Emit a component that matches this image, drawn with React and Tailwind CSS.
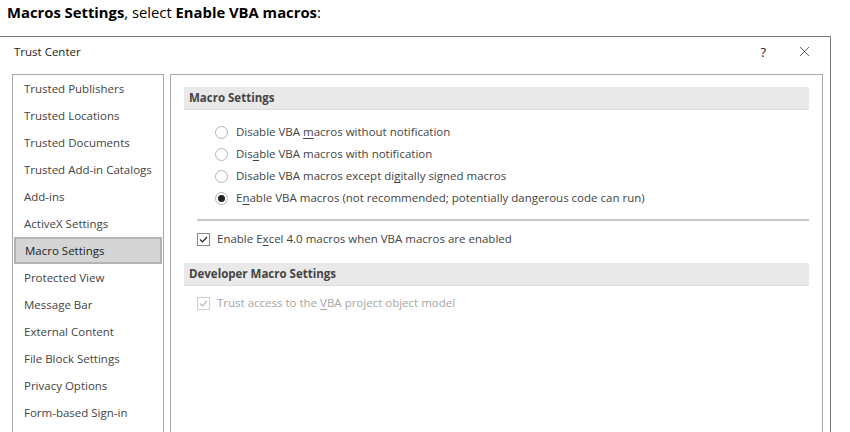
import { X } from "lucide-react";

const navItems = [
  "Trusted Publishers",
  "Trusted Locations",
  "Trusted Documents",
  "Trusted Add-in Catalogs",
  "Add-ins",
  "ActiveX Settings",
  "Macro Settings",
  "Protected View",
  "Message Bar",
  "External Content",
  "File Block Settings",
  "Privacy Options",
  "Form-based Sign-in",
];

const Radio = ({ checked }) => (
  <span className="w-[13px] h-[13px] rounded-full border border-[#b5b5b5] bg-white flex items-center justify-center shrink-0">
    {checked ? <span className="w-[7px] h-[7px] rounded-full bg-[#222]" /> : null}
  </span>
);

const Check = ({ disabled }) => (
  <span
    className={`w-[13px] h-[13px] border flex items-center justify-center shrink-0 ${
      disabled ? "border-[#cfcfcf]" : "border-[#8a8a8a]"
    }`}
  >
    <svg width="9" height="7" viewBox="0 0 9 7" fill="none">
      <path
        d="M1 3.5 L3.5 6 L8 1"
        stroke={disabled ? "#b8b8b8" : "#222"}
        strokeWidth="1.2"
      />
    </svg>
  </span>
);

const U = ({ children }) => <span className="underline underline-offset-2">{children}</span>;

const radios = [
  <>Disable VBA <U>m</U>acros without notification</>,
  <>Dis<U>a</U>ble VBA macros with notification</>,
  <>Disable VBA macros except di<U>g</U>itally signed macros</>,
  <>E<U>n</U>able VBA macros (not recommended; potentially dangerous code can run)</>,
];

export default function App() {
  return (
    <div className="w-[850px] h-[432px] overflow-hidden bg-white text-[#444] font-['Open_Sans',sans-serif]">
      <div className="h-[36px] pl-[7px] pt-[1px] text-[14.8px] text-black">
        <b>Macros Settings</b>, select <b>Enable VBA macros</b>:
      </div>

      <div className="w-[831px] h-[396px] border-t border-r border-[#7a7a7a] flex flex-col">
        <div className="h-[37px] flex items-start justify-between pt-[6px] pl-[14px] pr-[17px] text-[11.5px] text-[#222]">
          <span>Trust Center</span>
          <div className="flex items-center gap-[30px]">
            <span className="text-[13px] leading-[16px]">?</span>
            <X className="w-[17px] h-[17px]" strokeWidth={1} />
          </div>
        </div>

        <div className="flex-1 flex gap-[6px] pl-[12px] pr-[7px] min-h-0 text-[11.5px]">
          <div className="w-[152px] border border-b-0 border-[#ababab]">
            {navItems.map((item) =>
              item === "Macro Settings" ? (
                <div
                  key={item}
                  className="h-[27px] mx-[1px] border-2 border-[#b3b3b3] bg-[#d5d5d5] flex items-center pl-[9px] text-[#222]"
                >
                  {item}
                </div>
              ) : (
                <div key={item} className="h-[27px] flex items-center pl-[11px]">
                  {item}
                </div>
              )
            )}
          </div>

          <div className="flex-1 border border-b-0 border-[#ababab] px-[13px] pt-[12px]">
            <div className="h-[23px] bg-[#e9e9e9] border-b border-[#dcdcdc] flex items-center pl-[5px] font-bold">
              Macro Settings
            </div>
            <div className="pl-[31px] pt-[11px] flex flex-col">
              {radios.map((r, i) => (
                <div key={i} className="h-[22px] flex items-center gap-[8px]">
                  <Radio checked={i === 3} />
                  <span>{r}</span>
                </div>
              ))}
            </div>
            <div className="ml-[13px] mt-[10px] h-[2px] bg-[#c8c8c8]" />
            <div className="pl-[13px] h-[36px] flex items-center gap-[7px]">
              <Check />
              <span>
                Enable E<U>x</U>cel 4.0 macros when VBA macros are enabled
              </span>
            </div>
            <div className="mt-[6px] h-[23px] bg-[#e9e9e9] border-b border-[#dcdcdc] flex items-center pl-[5px] font-bold">
              Developer Macro Settings
            </div>
            <div className="pl-[13px] h-[34px] flex items-center gap-[7px] text-[#a6a6a6]">
              <Check disabled />
              <span>
                Trust access to the <U>V</U>BA project object model
              </span>
            </div>
          </div>
        </div>
      </div>
    </div>
  );
}
